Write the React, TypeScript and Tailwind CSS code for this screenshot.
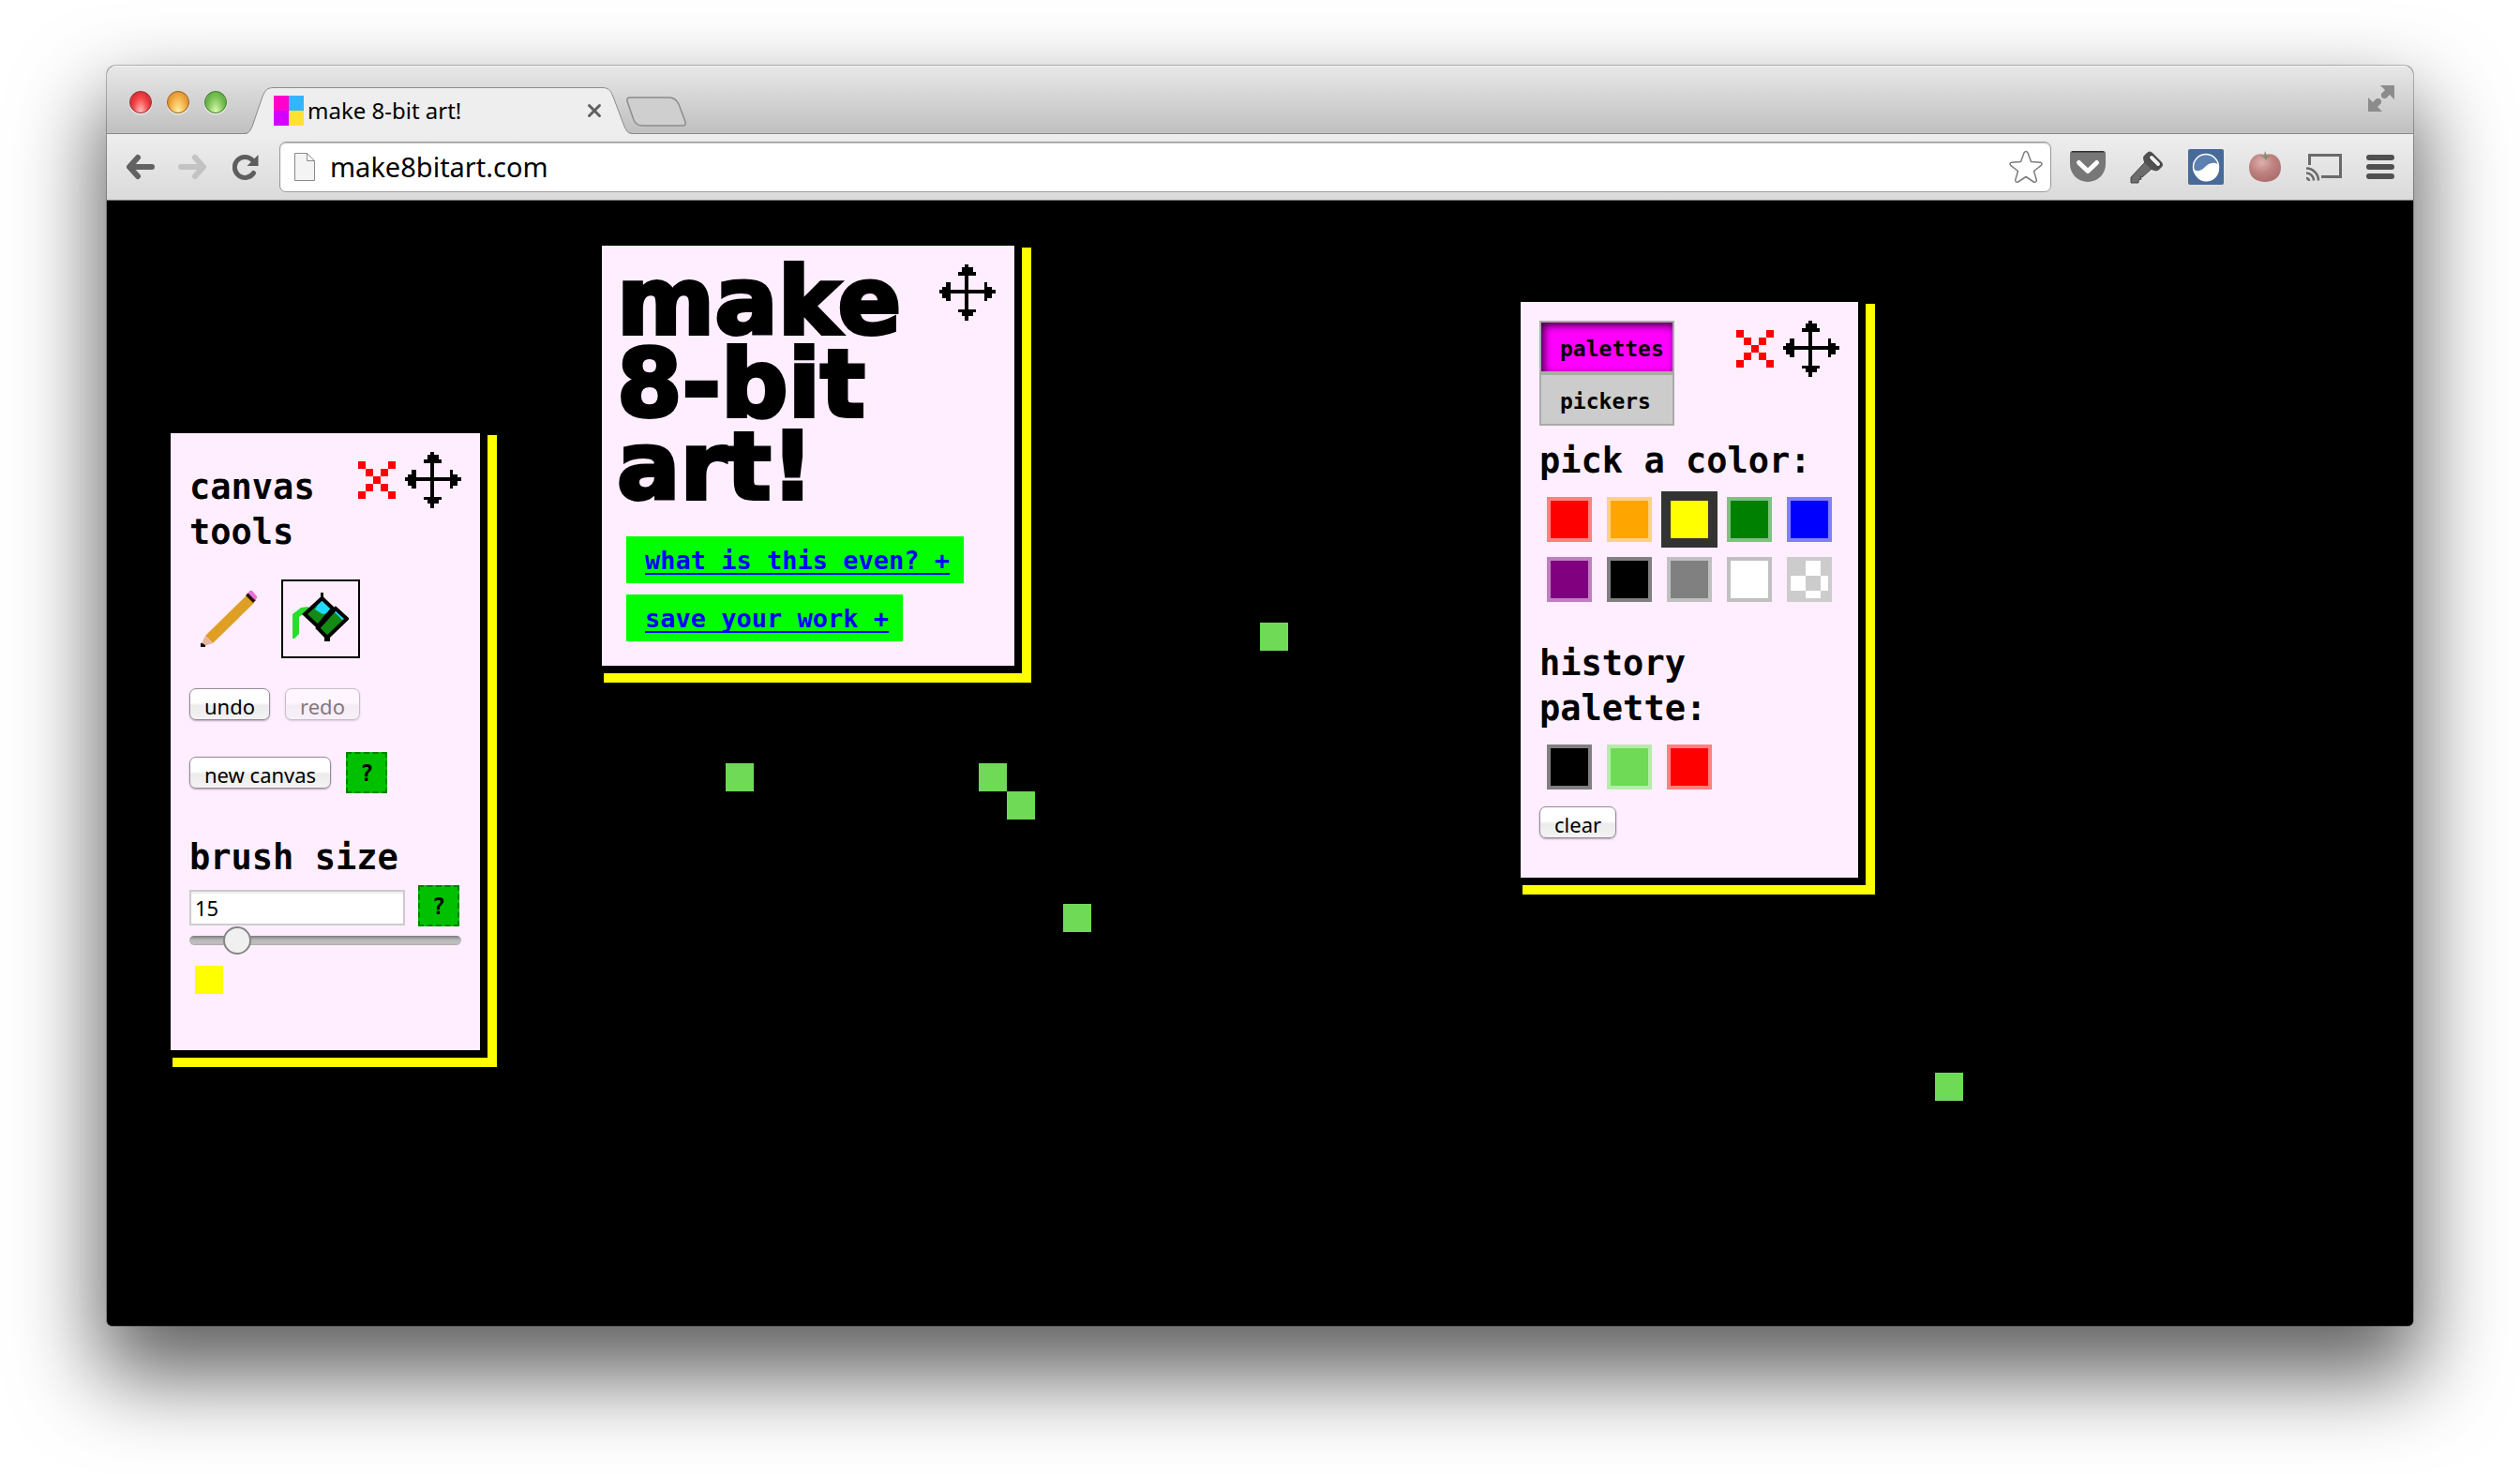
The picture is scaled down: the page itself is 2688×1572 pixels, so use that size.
import React, { useState } from "react";

const PIXEL_FONT = "font-['DejaVu_Sans_Mono',monospace]";
const UI_FONT = "font-['Noto_Sans',sans-serif]";

const palette = [
  { name: "red", cls: "bg-[#ff0000] border-[#ff8080]" },
  { name: "orange", cls: "bg-[#ffa500] border-[#ffd280]" },
  { name: "yellow", cls: "bg-[#ffff00] border-[#ffff80]" },
  { name: "green", cls: "bg-[#008000] border-[#80c080]" },
  { name: "blue", cls: "bg-[#0000ff] border-[#8080ff]" },
  { name: "purple", cls: "bg-[#800080] border-[#c080c0]" },
  { name: "black", cls: "bg-black border-[#808080]" },
  { name: "gray", cls: "bg-[#808080] border-[#c0c0c0]" },
  { name: "white", cls: "bg-white border-[#c0c0c0]" },
  { name: "transparent", cls: "bg-[#cccccc] border-[#cccccc]" },
];

const history = [
  { name: "black", cls: "bg-black border-[#808080]" },
  { name: "light green", cls: "bg-[#6eda55] border-[#b6ecaa]" },
  { name: "red", cls: "bg-[#ff0000] border-[#ff8080]" },
];

const pixels = [
  { left: 1230, top: 450 },
  { left: 660, top: 600 },
  { left: 930, top: 600 },
  { left: 960, top: 630 },
  { left: 1020, top: 750 },
  { left: 1950, top: 930 },
];

function MoveIcon() {
  return (
    <svg viewBox="0 0 60 60" className="size-[60px]" shapeRendering="crispEdges" aria-hidden="true">
      <path d="M27 0h4v60h-4zM0 27h60v4H0zM24 3h12v5H24zM20 8h19v4H20zM20 48h19v3H20zM24 51h12v4H24zM3 24h4v12H3zM7 19h5v20H7zM48 19h3v20h-3zM51 24h5v12h-5z" />
    </svg>
  );
}

function CloseIcon() {
  return (
    <svg viewBox="0 0 5 5" className="size-10" fill="#f00" shapeRendering="crispEdges" aria-hidden="true">
      <path d="M0 0h1v1H0zM4 0h1v1H4zM1 1h1v1H1zM3 1h1v1H3zM2 2h1v1H2zM1 3h1v1H1zM3 3h1v1H3zM0 4h1v1H0zM4 4h1v1H4z" />
    </svg>
  );
}

function PanelControls({ closable = true }: { closable?: boolean }) {
  return (
    <div className="flex shrink-0 items-center gap-[10px]">
      {closable && (
        <button aria-label="Close panel">
          <CloseIcon />
        </button>
      )}
      <button aria-label="Move panel" className="cursor-move">
        <MoveIcon />
      </button>
    </div>
  );
}

function PencilIcon() {
  return (
    <svg viewBox="0 0 60 60" className="size-[60px]" aria-hidden="true">
      <path d="M49 5l8 8-44 43-8-8z" fill="#df9f25" />
      <path d="M5 48l8 8-9 3-3-3z" fill="#e9b7a0" />
      <path d="M0 56h2l3 2v2H0z" fill="#1a120c" />
      <path d="M51 2l8 8-3 3-8-8z" fill="#23140c" />
      <path d="M52 0h3l5 6v2l-2 2-7-7z" fill="#ee6fd6" />
    </svg>
  );
}

function BucketIcon() {
  return (
    <svg viewBox="0 0 60 60" className="size-[60px]" aria-hidden="true">
      <path d="M17 17v4l-10 7v18l-5 5H0V25l4-3 5-4z" fill="#28dc32" />
      <path d="M31 8l12 11-16 17-14-12z" fill="#138a14" />
      <path d="M31 8l11 10-4 6-6 1-8-5z" fill="#22d8ff" />
      <path d="M47 19l12 11-22 23-11-12z" fill="#138a14" />
      <path d="M47 19l10 11-4 1-9-9z" fill="#22d8ff" />
      <path
        d="M31.500 8L13 25l14 13L43 19zM46 19l12 11-21 20-10-10z"
        fill="none"
        stroke="#000"
        strokeWidth="4"
      />
      <path d="M30 2h3v7h-3zM34 49h6v5h-6z" />
    </svg>
  );
}

const macButton =
  "flex h-[34px] items-center justify-center rounded-[7px] border border-[#94899a] bg-linear-to-b from-white from-45% via-[#ececec] via-55% to-[#f3f3f3] shadow-[0_1px_2px_rgba(0,0,0,0.3)] px-[15px] pt-1 text-[22px] leading-[30px] text-black";

function HelpButton({ label }: { label: string }) {
  return (
    <button
      aria-label={label}
      className={`${PIXEL_FONT} size-11 shrink-0 border-2 border-dashed border-[#008000] bg-[#00c000] pt-[2px] text-2xl leading-[38px] font-bold`}
    >
      ?
    </button>
  );
}

const panel =
  "absolute bg-[#ffeeff] shadow-[0_0_0_8px_#000,10px_10px_0_8px_#ff0]";
const heading = `${PIXEL_FONT} text-[37px] leading-[48px] font-bold text-black`;

function ToolsPanel() {
  const [size, setSize] = useState(15);
  return (
    <section aria-label="canvas tools" className={`${panel} left-[68px] top-[248px] w-[330px] p-5 pb-[60px]`}>
      <div className="flex items-start justify-between">
        <h2 className={`${heading} pt-[14px]`}>canvas tools</h2>
        <PanelControls />
      </div>
      <div className="mt-[26px] flex gap-[14px]">
        <button aria-label="Pencil" className="flex size-[84px] items-center justify-center">
          <PencilIcon />
        </button>
        <button aria-label="Paint bucket" aria-pressed="true" className="flex size-[84px] items-center justify-center border-2 border-black">
          <BucketIcon />
        </button>
      </div>
      <div className="mt-8 flex gap-4">
        <button className={macButton}>undo</button>
        <button disabled className={`${macButton} opacity-50`}>redo</button>
      </div>
      <div className="mt-[34px] flex items-center gap-4">
        <button className={macButton}>new canvas</button>
        <HelpButton label="About new canvas" />
      </div>
      <h2 className={`${heading} mt-[45px]`}>
        <label htmlFor="brush">brush size</label>
      </h2>
      <div className="mt-[5px] flex items-center gap-[14px]">
        <input
          id="brush"
          type="text"
          value={size}
          onChange={(e) => setSize(Number(e.target.value) || 1)}
          className="mt-1 h-[38px] w-[230px] border-2 border-[#cccccc] bg-white px-1 text-[22px] leading-[34px] shadow-[inset_0_2px_2px_rgba(0,0,0,0.08)] outline-none"
        />
        <HelpButton label="About brush size" />
      </div>
      <input
        type="range"
        aria-label="Brush size slider"
        min={1}
        max={101}
        value={size}
        onChange={(e) => setSize(Number(e.target.value))}
        className="block h-[30px] w-full appearance-none bg-transparent [&::-webkit-slider-runnable-track]:h-[10px] [&::-webkit-slider-runnable-track]:rounded-[5px] [&::-webkit-slider-runnable-track]:bg-[linear-gradient(#7c7c7c,#b8b8b8_45%,#c0c0c0_80%,#a8a8a8)] [&::-webkit-slider-thumb]:mt-[-10px] [&::-webkit-slider-thumb]:size-[30px] [&::-webkit-slider-thumb]:appearance-none [&::-webkit-slider-thumb]:rounded-full [&::-webkit-slider-thumb]:border-2 [&::-webkit-slider-thumb]:border-[#858585] [&::-webkit-slider-thumb]:bg-[#f0f0f0]"
      />
      <div className="mt-3 ml-[6px] size-[30px] bg-[#ffff00]" />
    </section>
  );
}

function TitlePanel() {
  const link = `${PIXEL_FONT} bg-[#00ff00] pt-[2px] pr-[15px] pl-5 text-[27px] leading-[48px] font-bold text-[#0000ff] underline decoration-2 underline-offset-4 [text-decoration-skip-ink:none]`;
  return (
    <section aria-label="make 8-bit art" className={`${panel} left-[528px] top-[48px] w-[440px] p-5 pb-[26px] pl-4`}>
      <div className="flex items-start justify-between">
        <h1 className="-mt-1 font-['DejaVu_Sans',sans-serif] text-[100px] leading-[88px] font-bold whitespace-nowrap text-black [-webkit-text-stroke:4px_#000]">
          make
          <br />
          8-bit
          <br />
          art!
        </h1>
        <div className="-ml-5">
          <PanelControls closable={false} />
        </div>
      </div>
      <nav className="mt-[30px] ml-[10px] flex flex-col items-start gap-3">
        <a href="#about" className={link}>what is this even? +</a>
        <a href="#save" className={link}>save your work +</a>
      </nav>
    </section>
  );
}

function Swatch({ name, cls, selected }: { name: string; cls: string; selected?: boolean }) {
  return (
    <div className="flex size-16 items-center justify-center">
      {selected ? (
        <button aria-label={name} aria-pressed="true" className="size-[60px] border-[10px] border-[#333333] bg-[#ffff00]" />
      ) : (
        <button aria-label={name} className={`size-12 border-4 ${cls}`}>
          {name === "transparent" && (
            <svg viewBox="4 4 40 40" className="size-10" fill="#fff" shapeRendering="crispEdges" aria-hidden="true">
              <path d="M20 4h16v16H20zM4 20h16v16H4zM36 20h8v16h-8zM20 36h16v8H20z" />
            </svg>
          )}
        </button>
      )}
    </div>
  );
}

function PalettePanel() {
  const tab = `${PIXEL_FONT} h-14 w-[144px] border-2 border-[#aaaaaa] pt-1 pl-5 text-left text-[23px] leading-[48px] font-bold whitespace-nowrap text-black`;
  return (
    <section aria-label="color palettes" className={`${panel} left-[1508px] top-[108px] w-[360px] p-5 pb-[42px]`}>
      <div className="flex items-start justify-between">
        <div role="tablist" className="flex flex-col">
          <button role="tab" aria-selected="true" className={`${tab} bg-[#ff00ff] shadow-[inset_3px_3px_8px_rgba(0,0,0,0.8)]`}>
            palettes
          </button>
          <button role="tab" aria-selected="false" className={`${tab} bg-[#cccccc]`}>
            pickers
          </button>
        </div>
        <PanelControls />
      </div>
      <h2 className={`${heading} mt-[14px] whitespace-nowrap`}>pick a color:</h2>
      <div className="mt-[6px] grid grid-cols-5">
        {palette.map((c) => (
          <Swatch key={c.name} name={c.name} cls={c.cls} selected={c.name === "yellow"} />
        ))}
      </div>
      <h2 className={`${heading} mt-[34px]`}>
        history
        <br />
        palette:
      </h2>
      <div className="mt-[6px] flex">
        {history.map((c) => (
          <Swatch key={c.name} name={c.name} cls={c.cls} />
        ))}
      </div>
      <button className={`${macButton} mt-[10px]`}>clear</button>
    </section>
  );
}

function TabStrip() {
  return (
    <header className="flex h-[73px] items-end bg-linear-to-b from-[#e8e8e8] to-[#bfbfbf] shadow-[inset_0_-1px_0_#8a8a8a,inset_0_1px_0_#f4f4f4]">
      <div className="flex gap-4 self-center pt-1 pl-6">
        <button aria-label="Close window" className="size-6 rounded-full border border-[#8d2a2a] bg-[radial-gradient(ellipse_at_50%_100%,#ffc4c0_0%,#f5484a_50%,#d92d33_75%,#f9a5a5_95%)] shadow-[0_1px_1px_#fff]" />
        <button aria-label="Minimize window" className="size-6 rounded-full border border-[#925c1c] bg-[radial-gradient(ellipse_at_50%_100%,#fff3a8_0%,#f5b44a_50%,#e39330_75%,#fbdcae_95%)] shadow-[0_1px_1px_#fff]" />
        <button aria-label="Zoom window" className="size-6 rounded-full border border-[#3f7a2c] bg-[radial-gradient(ellipse_at_50%_100%,#e2ffb8_0%,#84c75c_50%,#62ad45_75%,#c8ecb4_95%)] shadow-[0_1px_1px_#fff]" />
      </div>
      <div className="relative ml-[18px] h-[50px] w-[416px]">
        <svg viewBox="0 0 416 50" className="absolute inset-0 size-full" aria-hidden="true">
          <path d="M0 50C6 50 7 46 9 42L20 10C23 3 25 .5 32 .5H382C389 .5 391 3 394 10L406 42C408 46 409 50 416 50Z" fill="#eeeeee" />
          <path d="M0 49.500C6 49.500 7 46 9 42L20 10C23 3 25 .5 32 .5H382C389 .5 391 3 394 10L406 42C408 46 409 49.500 416 49.500" fill="none" stroke="#8a8a8a" />
        </svg>
        <div className="relative flex h-full items-center pr-[34px] pl-8">
          <div className="grid size-8 grid-cols-2" aria-hidden="true">
            <span className="bg-[#ff00cf]" />
            <span className="bg-[#33b5ff]" />
            <span className="bg-[#d400ff]" />
            <span className="bg-[#ffe135]" />
          </div>
          <span className="ml-1 flex-1 text-[24px] leading-8 whitespace-nowrap text-black">make 8-bit art!</span>
          <button aria-label="Close tab">
            <svg viewBox="0 0 16 16" className="size-4" stroke="#606060" strokeWidth="3" strokeLinecap="round" aria-hidden="true">
              <path d="M2.500 2.500l11 11M13.500 2.500l-11 11" />
            </svg>
          </button>
        </div>
      </div>
      <button aria-label="New tab" className="mb-2 -ml-2">
        <svg viewBox="0 0 64 32" className="h-8 w-16" fill="#cfcfcf" stroke="#8c8c8c" strokeWidth="1.500" aria-hidden="true">
          <path d="M4 1H46C51 1 54 4 56 8L63 27Q64 31 60 31H18C12 31 10 29 8 25L1 5Q0 1 4 1Z" />
        </svg>
      </button>
      <button aria-label="Full screen" className="mr-5 mb-6 ml-auto">
        <svg viewBox="0 0 28 28" className="size-7" fill="#8c8c8c" aria-hidden="true">
          <path d="M13 0h15v15l-5-5-4 4h-3l-2-2V9l4-4zM0 13l5 5 4-4h3l2 2v3l-4 4 5 5H0z" />
        </svg>
      </button>
    </header>
  );
}

function Toolbar() {
  return (
    <div className="flex h-[71px] items-center bg-linear-to-b from-[#eeeeee] to-[#dadada] pr-5 pb-[2px] pl-5 shadow-[inset_0_-1px_0_#777]">
      <div className="flex gap-6">
        <button aria-label="Back">
          <svg viewBox="0 0 32 28" className="h-7 w-8" fill="none" stroke="#626262" strokeWidth="6" strokeLinecap="round" strokeLinejoin="round" aria-hidden="true">
            <path d="M13 4L4 14l9 10M5 14h23" />
          </svg>
        </button>
        <button aria-label="Forward" disabled>
          <svg viewBox="0 0 32 28" className="h-7 w-8" fill="none" stroke="#c3c3c3" strokeWidth="6" strokeLinecap="round" strokeLinejoin="round" aria-hidden="true">
            <path d="M18 4l9 10-9 10M26 14H3" />
          </svg>
        </button>
        <button aria-label="Reload">
          <svg viewBox="0 0 28 28" className="ml-[2px] size-7" aria-hidden="true">
            <path d="M22.500 20.500A11 11 0 1 1 21 6.500" fill="none" stroke="#5e5e5e" strokeWidth="5" strokeLinecap="round" />
            <path d="M27.500 1v12h-12z" fill="#5e5e5e" />
          </svg>
        </button>
      </div>
      <div className="ml-[22px] flex h-[54px] flex-1 items-center rounded-[7px] border border-[#9a9a9a] bg-white pr-2 pl-[15px] shadow-[inset_0_1px_1px_rgba(0,0,0,0.25)]">
        <svg viewBox="0 0 22 30" className="h-[30px] w-[22px]" fill="#f4f4f4" stroke="#8a8a8a" aria-hidden="true">
          <path d="M.5.5h13l8 8v21H.5zM13.500.5v8h8" />
        </svg>
        <input
          type="text"
          aria-label="Address"
          defaultValue="make8bitart.com"
          className="ml-4 h-12 min-w-0 flex-1 bg-transparent text-[29px] leading-[48px] text-black outline-none"
        />
        <button aria-label="Bookmark">
          <svg viewBox="0 0 36 36" className="size-9" fill="#fff" stroke="#7d7d7d" strokeWidth="1.500" strokeLinejoin="round" aria-hidden="true">
            <path d="M16 3q2-3 4 0l3.500 9.500 10 .8q2.500.7.800 3L26.500 22.500l2.800 9.500q0 3-3 2L18 28.500 9.700 34q-3 1-3-2l2.800-9.500L1.700 16.300q-1.700-2.300.8-3l10-.8z" />
          </svg>
        </button>
      </div>
      <div className="ml-5 flex items-center gap-[26px]">
        <button aria-label="Save to Pocket">
          <svg viewBox="0 0 38 34" className="h-[34px] w-[38px]" aria-hidden="true">
            <path d="M3 0h32q3 0 3 3v11a19 19 0 0 1-38 0V3q0-3 3-3z" fill="#777" />
            <path d="M1 1.500Q2 0 3 0h32q1 0 2 1.500z" fill="#2e2e2e" />
            <path d="M9.500 12.500l9.500 9 9.500-9" fill="none" stroke="#fff" strokeWidth="5" strokeLinecap="round" strokeLinejoin="round" />
          </svg>
        </button>
        <button aria-label="Passwords">
          <svg viewBox="0 0 36 36" className="size-9" aria-hidden="true">
            <path d="M17 12l7 7-11 10-2-1 1 3-3 1v3H1v-6z" fill="#6c6c6c" stroke="#444" strokeWidth="1" />
            <path d="M18 3q3-3 6 0l10 10q2 3 0 5l-3 3q-2 2-5 1l-3-1-8-8-1-4q0-2 1-3z" fill="#505050" />
            <path d="M23 8l7 7" stroke="#3a3a3a" strokeWidth="6" strokeLinecap="round" />
            <path d="M23 8l7 7" stroke="#f0f0f0" strokeWidth="4" strokeLinecap="round" />
          </svg>
        </button>
        <button aria-label="Wave extension">
          <svg viewBox="0 0 38 38" className="size-[38px]" aria-hidden="true">
            <rect width="38" height="38" rx="2" fill="#476a98" />
            <circle cx="19" cy="19" r="13.500" fill="#5d80b0" stroke="#fff" strokeWidth="1.500" />
            <path d="M6 21C8 24 13 24 17 20S25 13 32 16A13.500 13.500 0 1 1 6 21z" fill="#fff" />
          </svg>
        </button>
        <button aria-label="Tomato timer">
          <svg viewBox="0 0 36 36" className="size-9" aria-hidden="true">
            <defs>
              <radialGradient id="tomato" cx="40%" cy="30%" r="75%">
                <stop offset="0" stopColor="#ddb0ae" />
                <stop offset=".5" stopColor="#bf8280" />
                <stop offset="1" stopColor="#aa6c6c" />
              </radialGradient>
            </defs>
            <path d="M18 5C28 2 35 9 35 19S27 34 18 34 1 29 1 19 8 2 18 5z" fill="url(#tomato)" />
            <path d="M12 5l5 1 1-5 2 5 5 0-4 2-2 3-2-3z" fill="#8c8a72" />
          </svg>
        </button>
        <button aria-label="Cast">
          <svg viewBox="0 0 38 30" className="h-[30px] w-[38px]" fill="none" stroke="#6a6a6a" strokeWidth="3" aria-hidden="true">
            <path d="M3.500 13V2.500h33v23H16" />
            <path d="M0 16.500a13 13 0 0 1 13 13M0 21.500a8 8 0 0 1 8 8M0 27a3 3 0 0 1 3 3" strokeWidth="2.500" />
          </svg>
        </button>
        <button aria-label="Menu" className="flex w-[30px] flex-col gap-1">
          <span className="h-[6px] rounded-full bg-[#505050]" />
          <span className="h-[6px] rounded-full bg-[#505050]" />
          <span className="h-[6px] rounded-full bg-[#505050]" />
        </button>
      </div>
    </div>
  );
}

export default function App() {
  return (
    <div className={`${UI_FONT} flex min-h-screen flex-col bg-white px-[114px] pt-[70px] pb-[158px]`}>
      <div className="flex flex-1 flex-col overflow-hidden rounded-t-[9px] rounded-b-[6px] bg-black shadow-[0_0_0_1px_rgba(0,0,0,0.25),0_46px_90px_8px_rgba(0,0,0,0.62)]">
        <TabStrip />
        <Toolbar />
        <main className="relative min-h-[1200px] flex-1 bg-black">
          {pixels.map((p) => (
            <div key={`${p.left}-${p.top}`} className="absolute size-[30px] bg-[#6eda55]" style={{ left: p.left, top: p.top }} />
          ))}
          <TitlePanel />
          <ToolsPanel />
          <PalettePanel />
        </main>
      </div>
    </div>
  );
}
